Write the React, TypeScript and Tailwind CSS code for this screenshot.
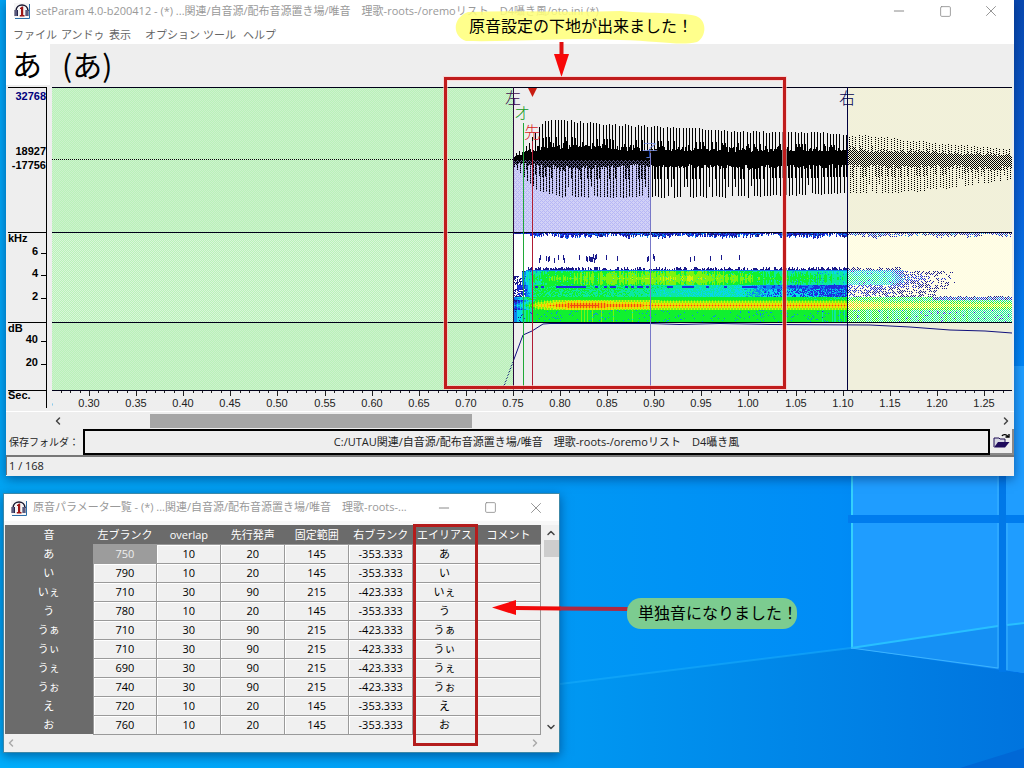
import { ChevronDown, ChevronLeft, ChevronRight, ChevronUp, Minus, Square, X } from "lucide-react";

type Point = [number, number];

const menu = [
  { label: "ファイル", width: "w-12" },
  { label: "アンドゥ", width: "w-12" },
  { label: "表示", width: "w-9" },
  { label: "オプション", width: "w-[58px]" },
  { label: "ツール", width: "w-10" },
  { label: "ヘルプ", width: "w-10" },
];

const columns = ["左ブランク", "overlap", "先行発声", "固定範囲", "右ブランク", "エイリアス", "コメント"];

const rows = [
  { sound: "あ", values: ["750", "10", "20", "145", "-353.333"] },
  { sound: "い", values: ["790", "10", "20", "145", "-353.333"] },
  { sound: "いぇ", values: ["710", "30", "90", "215", "-423.333"] },
  { sound: "う", values: ["780", "10", "20", "145", "-353.333"] },
  { sound: "うぁ", values: ["710", "30", "90", "215", "-423.333"] },
  { sound: "うぃ", values: ["710", "30", "90", "215", "-423.333"] },
  { sound: "うぇ", values: ["690", "30", "90", "215", "-423.333"] },
  { sound: "うぉ", values: ["740", "30", "90", "215", "-423.333"] },
  { sound: "え", values: ["720", "10", "20", "145", "-353.333"] },
  { sound: "お", values: ["760", "10", "20", "145", "-353.333"] },
];

// --- chart data -----------------------------------------------------------

const WIDTH = 960;
const START = 461;
const RIGHT = 795;

// cheap repeatable noise, 0..1
function noise(x: number, y: number) {
  const n = Math.sin(x * 127.1 + y * 311.7) * 43758.5453;
  return n - Math.floor(n);
}

function lerp(points: Point[], x: number) {
  if (x <= points[0][0]) return points[0][1];
  for (let i = 1; i < points.length; i++) {
    const [x0, y0] = points[i - 1];
    const [x1, y1] = points[i];
    if (x <= x1) return y0 + ((y1 - y0) * (x - x0)) / (x1 - x0);
  }
  return points[points.length - 1][1];
}

const topEnvelope: Point[] = [[461, 4], [475, 14], [484, 28], [492, 39], [506, 41], [548, 36], [588, 34], [640, 32], [690, 28], [768, 27], [795, 24], [810, 25], [850, 20], [900, 15], [960, 10]];
const bottomEnvelope: Point[] = [[461, 6], [472, 18], [486, 32], [510, 38], [590, 38], [690, 38], [795, 34], [840, 34], [890, 30], [960, 20]];
const coreTop: Point[] = [[461, 2], [480, 10], [500, 14], [600, 11], [795, 10], [960, 4]];
const coreBottom: Point[] = [[461, 3], [480, 5], [510, 8], [590, 5], [700, 7], [795, 6], [960, 8]];

function buildWave() {
  let d = "";
  for (let x = START; x < WIDTH; x++) {
    const phase = (x - START) % 16;
    const spikeUp = phase === 0 || phase === 3 || phase === 6 || phase === 10 || phase === 13;
    const spikeDown = phase === 1 || phase === 4 || phase === 7 || phase === 11 || phase === 14;
    const jitter = noise(x, 1);
    let top = lerp(coreTop, x) * (0.7 + jitter * 0.6);
    let bottom = lerp(coreBottom, x) * (0.7 + noise(x, 2) * 0.7);
    if (spikeUp) {
      top = lerp(topEnvelope, x) * (0.94 + jitter * 0.06);
      if (jitter > 0.45) bottom = lerp(bottomEnvelope, x) * 0.5;
    }
    if (spikeDown) {
      bottom = lerp(bottomEnvelope, x) * (jitter > 0.12 ? 0.94 + noise(x, 3) * 0.06 : 0.7);
      if (jitter > 0.6) top = lerp(topEnvelope, x) * 0.55;
    }
    d += `M${x} ${Math.round(72 - top)}h1V${Math.round(73 + bottom)}h-1z`;
  }
  return d;
}

const palette = ["#1a1a8c", "#1c2ee0", "#0a86f0", "#08d8e8", "#0ce8a0", "#10f030", "#7cf410", "#d8f008", "#fcb400", "#f04a10"];

const upperLevel: Point[] = [[468, 2], [478, 4.4], [500, 5.7], [640, 6.4], [690, 5.7], [720, 5], [760, 5], [800, 4.1], [836, 3.6], [850, 1.6], [884, 0.6]];
const middleLevel: Point[] = [[461, 0.4], [472, 1], [482, 4.6], [560, 4.4], [600, 4], [690, 3.2], [715, 1.8], [795, 1], [880, 0.2]];
const lowerLevel: Point[] = [[461, 2], [472, 4.5], [484, 7.4], [500, 8.4], [525, 9.4], [560, 8.9], [620, 8.2], [795, 8.2], [840, 7.2], [960, 6.7]];
const bottomLevel: Point[] = [[461, 1.4], [472, 4.2], [490, 5.2], [740, 5], [795, 4.7], [960, 4]];

// palette index at a pixel of the spectrogram, -1 where it stays white
function level(x: number, y: number) {
  const n = noise(x, y);
  const c = noise(x, 7);
  // fringe under the upper border
  if (y < 153) {
    const clump = 0.5 + 0.5 * Math.sin(x / 7) * Math.sin(x / 17);
    const depth = x < 478 ? 1 : (x > RIGHT ? 2.6 : 3.2) + clump * 2.8 - noise(x, 4) * 4;
    return y - 146 < depth ? (n > 0.8 ? 2 : n > 0.4 ? 1 : 0) : -1;
  }
  if (y < 179) {
    if (x < 476 || x > 700) return -1;
    const middle = 171 + Math.round(noise(x, 12) * 4 - 2);
    const dense = x < 560 ? 0.3 + 0.3 * Math.sin(x / 6) : 0.1;
    return Math.abs(y - middle) < 3 && noise(x, 13) < dense ? 0 : -1;
  }
  if (y < 184) {
    if (x < 474 || x > 850) return -1;
    return y - 179 > c * 4 ? (y > 182 ? 2 : 0) : -1;
  }
  if (y < 198) {
    if (x > 884 + n * 20) return -1;
    if (x < 470) return n > 0.5 && y > 188 ? 0 : -1;
    if (x > 850 && n < (x - 830) / 90) return -1;
    const fall = Math.abs(y - 191) * 0.13;
    return lerp(upperLevel, x) - fall + (c - 0.5) * 1.1 + (n > 0.95 ? -2 : 0);
  }
  if (y < 202) {
    if (x > 895 || x < 465) return -1;
    if (x > RIGHT && n > 0.6) return -1;
    const dash = noise(Math.floor(x / 3), 5) > 0.6 && (y === 199 || y === 200);
    return dash && x > 482 ? 1 : lerp(middleLevel, x) + (n - 0.3);
  }
  if (y < 210) {
    if (x > 884) return y > 208 && c > 0.6 ? 0 : -1;
    if (x > RIGHT && n > 0.55) return -1;
    if (x < 473 && n > 0.6) return -1;
    return lerp(middleLevel, x) + (n - 0.5) * 1.2 + (x > 690 && x < RIGHT && n > 0.5 ? 1 : 0);
  }
  if (y < 213) {
    if (x > 880) return c * 2;
    return Math.min(lerp(bottomLevel, x) + (n - 0.5), 5);
  }
  if (y < 223) {
    const fall = Math.abs(y - 218) * 0.45;
    return lerp(lowerLevel, x) - fall + (x % 3 === 0 ? 0.4 : -0.6);
  }
  return lerp(bottomLevel, x) + (c - 0.5) * 0.8 + (n > 0.95 ? -3 : 0);
}

function buildSpectrogram() {
  const paths = palette.map(() => "");
  for (let x = START; x < WIDTH; x++) {
    let from = 146;
    let current = -2;
    for (let y = 146; y <= 235; y++) {
      const raw = y === 235 ? -2 : level(x, y);
      const next = raw <= -1 ? -1 : Math.max(0, Math.min(palette.length - 1, Math.round(raw)));
      if (next !== current || y === 235) {
        if (current >= 0) paths[current] += `M${x} ${from}h1v${y - from}h-1z`;
        current = next;
        from = y;
      }
    }
  }
  return paths;
}

const wave = buildWave();
const spectrogram = buildSpectrogram();

const ticks = Array.from({ length: 102 }, (_, i) => ({
  x: Math.round(37 + (i - 4) * 9.42),
  major: (i - 4) % 5 === 0,
}));

const labels = Array.from({ length: 21 }, (_, i) => ({
  x: Math.round(37 + (i - 1) * 47.1),
  text: (0.25 + i * 0.05).toFixed(2),
}));

// --- pieces ---------------------------------------------------------------

function Wallpaper() {
  return (
    <svg className="absolute inset-0 h-full w-full" viewBox="0 0 1024 768" preserveAspectRatio="none" aria-hidden="true">
      <defs>
        <linearGradient id="sky" x1="0" y1="0" x2="1" y2="0">
          <stop offset="0" stopColor="#00a5f4" />
          <stop offset="0.5" stopColor="#009af4" />
          <stop offset="0.82" stopColor="#008cf6" />
          <stop offset="1" stopColor="#0072e6" />
        </linearGradient>
        <linearGradient id="shade" x1="0" y1="0" x2="0" y2="1">
          <stop offset="0" stopColor="#0848b0" />
          <stop offset="0.5" stopColor="#0a60d8" />
          <stop offset="1" stopColor="#0088f8" />
        </linearGradient>
        <linearGradient id="floor" x1="0" y1="0" x2="1" y2="0">
          <stop offset="0" stopColor="#00aefc" />
          <stop offset="0.5" stopColor="#009cf4" />
          <stop offset="1" stopColor="#0074de" />
        </linearGradient>
      </defs>
      <rect width="1024" height="768" fill="url(#sky)" />
      <rect x="1000" width="24" height="380" fill="url(#shade)" />
      <path d="M0 720L560 684L851 648L1024 674V768H0z" fill="url(#floor)" />
      <path d="M560 684L851 648" stroke="#1cb0fc" strokeWidth="2" opacity="0.5" />
      <path d="M851 366H999V668L851 648zM1006 366H1024V673L1006 670z" fill="#1f9dff" />
      <path d="M851 648L1024 623V673z" fill="#1590f4" />
      <rect x="848" y="515" width="176" height="8" fill="#007cee" />
      <rect x="999" y="366" width="7" height="306" fill="#0078e8" />
      <path d="M851 366h2V515h-2zM851 523h2V648h-2z" fill="#34d0fc" />
      <path d="M851 648L998 626M1007 625L1024 623" stroke="#28c0ff" strokeWidth="2" />
      <path d="M851 648L998 668M998 366V515M998 523V668M1007 523V670" stroke="#3cb4ff" />
      <path d="M960 768L1024 748V768z" fill="#0068d6" />
    </svg>
  );
}

function AppIcon() {
  return (
    <svg className="h-4 w-4 shrink-0" viewBox="0 0 16 16" aria-hidden="true">
      <rect width="15" height="15" fill="#f6f6f6" />
      <path d="M15.5 1V15.5H1" fill="none" stroke="#2c6ea8" />
      <path d="M2 8C2 0 14 0 14 8" fill="none" stroke="#181830" strokeWidth="1.6" />
      <path d="M0.5 7H4V13H0.5zM11.5 7H14.5V13H11.5z" fill="#26264c" />
      <path d="M2 7V13M13 7V13" stroke="#8c8cb0" />
      <path d="M6 5L8 3.5H9.2V12H10.5V13.5H5.8V12H7V6H6z" fill="#9c1414" />
    </svg>
  );
}

function WindowButtons() {
  return (
    <div className="flex shrink-0 items-center text-[#8a8a8a]">
      <button type="button" aria-label="最小化" className="flex h-5 w-[46px] items-center justify-center"><Minus size={16} strokeWidth={1.5} /></button>
      <button type="button" aria-label="最大化" className="flex h-5 w-[46px] items-center justify-center"><Square size={13} strokeWidth={1.5} /></button>
      <button type="button" aria-label="閉じる" className="flex h-5 w-[46px] items-center justify-center"><X size={18} strokeWidth={1.2} /></button>
    </div>
  );
}

function Axis() {
  return (
    <svg className="h-[322px] w-[46px] shrink-0 font-['Liberation_Sans',sans-serif] text-[11px] font-bold" viewBox="0 0 46 322">
      <path d="M2 0.5H41M2 145.5H41M2 235.5H41M2 303.5H41M40.5 0V321" stroke="#000" fill="none" />
      <path d="M35 166.5H41M35 188.5H41M35 211.5H41M35 254.5H41M35 277.5H41" stroke="#000" />
      <g textAnchor="end">
        <text x="40" y="13" fill="#00007c">32768</text>
        <text x="40" y="68">18927</text>
        <text x="40" y="82">-17756</text>
        <text x="32" y="168">6</text>
        <text x="32" y="190">4</text>
        <text x="32" y="213">2</text>
        <text x="32" y="256">40</text>
        <text x="32" y="279">20</text>
      </g>
      <text x="2" y="155">kHz</text>
      <text x="2" y="245">dB</text>
      <text x="2" y="312">Sec.</text>
    </svg>
  );
}

function Chart() {
  return (
    <svg className="h-[322px] min-w-0 flex-1" viewBox="0 0 960 322" preserveAspectRatio="xMinYMin slice" role="img" aria-label="波形">
      <defs>
        <pattern id="green" width="2" height="2" patternUnits="userSpaceOnUse">
          <path d="M0 0h1v1H0zM1 1h1v1H1z" fill="#b9f2b9" shapeRendering="crispEdges" />
        </pattern>
        <pattern id="cream" width="2" height="2" patternUnits="userSpaceOnUse">
          <path d="M0 0h1v1H0zM1 1h1v1H1z" fill="#f3f2d8" shapeRendering="crispEdges" />
        </pattern>
        <pattern id="cream-light" width="2" height="2" patternUnits="userSpaceOnUse">
          <path d="M0 0h1v1H0zM1 1h1v1H1z" fill="#fffde2" shapeRendering="crispEdges" />
        </pattern>
        <pattern id="violet" width="4" height="4" patternUnits="userSpaceOnUse">
          <path d="M0 0h1v1H0zM2 2h1v1H2zM2 0h1v1H2zM0 2h1v1H0zM1 1h1v1H1zM3 3h1v1H3z" fill="#a4a4f6" shapeRendering="crispEdges" />
        </pattern>
      </defs>
      <rect x="461" y="146" width="335" height="89" fill="#fff" />
      <rect width="461" height="303" fill="#cdf2cd" />
      <rect y="146" width="461" height="89" fill="#daf6da" />
      <rect x="796" width="164" height="303" fill="#f0efdc" />
      <rect x="796" y="146" width="164" height="89" fill="#fffde8" />
      <rect x="462" y="73" width="136" height="72" fill="#d2d2f6" />
      <g shapeRendering="crispEdges">
        <path d={wave} />
        {spectrogram.map((d, i) => (
          <path key={palette[i]} d={d} fill={palette[i]} />
        ))}
      </g>
      <path d="M435 302L452 299L471 248L480 244L491 237L498 236.500H598L628 237.500L668 236.500L718 237.500L818 238L858 240L898 243L933 244L960 246" fill="none" stroke="#10107c" />
      <rect width="461" height="303" fill="url(#green)" />
      <rect x="796" width="164" height="145" fill="url(#cream)" />
      <rect x="796" y="146" width="164" height="89" fill="url(#cream-light)" />
      <rect x="462" y="73" width="136" height="72" fill="url(#violet)" fillOpacity="0.6" />
      <path d="M0 72.5H462" stroke="#000" strokeDasharray="1 1" />
      <path d="M0 0.5H960M0 145.5H960M0 235.5H960M0 303.5H960" stroke="#000018" />
      <path d="M461.5 0V303" stroke="#28083c" />
      <path d="M471.5 36V303" stroke="#20a838" />
      <path d="M480.5 54V303" stroke="#b01c34" />
      <path d="M598.5 66V303" stroke="#7878c8" />
      <path d="M795.5 0V303" stroke="#000040" />
      <path d="M476 1H485L480.5 10z" fill="#c81c10" />
      <g className="font-['Noto_Sans_CJK_JP',sans-serif] text-base font-light" textAnchor="middle">
        <text x="461" y="17" fill="#3c0c50">左</text>
        <text x="470" y="32" fill="#109820">オ</text>
        <text x="480" y="51" fill="#d81c1c">先</text>
        <text x="598" y="69" fill="#7c90e0">子</text>
        <text x="795" y="17" fill="#000050">右</text>
      </g>
      {ticks.map((t) => (
        <path key={t.x} d={`M${t.x + 0.5} 304v${t.major ? 5 : 2}`} stroke="#222" />
      ))}
      <g className="font-['Liberation_Sans',sans-serif] text-[11px]" textAnchor="middle" fill="#222">
        {labels.map((l) => (
          <text key={l.text} x={l.x} y="320">{l.text}</text>
        ))}
      </g>
    </svg>
  );
}

function FolderIcon() {
  return (
    <svg width="17" height="16" viewBox="0 0 17 16" aria-hidden="true">
      <path d="M1 14V5H6L7 6H12V9" fill="#d8d8e4" stroke="#1c0c54" />
      <path d="M1 14.5L5 9H16.5L12 14.5z" fill="#200c5c" />
      <path d="M9 3C10 1 14 1 15 4M12.5 4H16V1" fill="none" stroke="#000" strokeWidth="1.4" />
    </svg>
  );
}

function MainWindow() {
  return (
    <section className="absolute left-[6px] right-[10px] top-0 bg-[#eeeeee] pb-px shadow-[0_3px_10px_rgba(0,30,80,0.5)]">
      <header className="flex h-[22px] items-center bg-white pl-2">
        <AppIcon />
        <h1 className="ml-1.5 min-w-0 flex-1 truncate whitespace-pre text-[11px] text-[#999]">setParam 4.0-b200412 - (*) ...関連/自音源/配布音源置き場/唯音　理歌-roots-/oremoリスト　D4囁き風/oto.ini (*)</h1>
        <WindowButtons />
      </header>
      <nav className="flex h-[22px] items-center bg-white pl-[7px] text-[11px] text-[#666]">
        {menu.map((m) => (
          <button key={m.label} type="button" className={`${m.width} shrink-0 text-left whitespace-nowrap pt-1`}>{m.label}</button>
        ))}
      </nav>

      <div className="flex h-[43px] items-start text-[30px] leading-[41px] text-black">
        <span className="w-11 bg-white pl-1.5">あ</span>
        <span className="pl-3 font-['Noto_Sans_CJK_JP',sans-serif]">(あ)</span>
      </div>

      <div className="flex pr-0.5">
        <Axis />
        <Chart />
      </div>

      {/* Horizontal scroll */}
      <div className="mt-0.5 flex h-[18px] items-center border-t border-white pl-[46px] pr-0.5 text-[#444]">
        <button type="button" aria-label="左へ" className="w-[17px]"><ChevronLeft size={12} strokeWidth={3} /></button>
        <div className="h-full min-w-0 flex-1 pl-[81px] pt-0.5">
          <div className="h-[14px] w-[322px] bg-[#a6a6a6]" />
        </div>
        <button type="button" aria-label="右へ" className="flex w-[17px] justify-end"><ChevronRight size={12} strokeWidth={3} /></button>
      </div>

      <div className="flex h-[26px] items-stretch">
        <label htmlFor="folder" className="w-[77px] shrink-0 whitespace-nowrap pl-[3px] text-[10px] leading-[26px] text-[#222]">保存フォルダ：</label>
        <input
          id="folder"
          readOnly
          value="C:/UTAU関連/自音源/配布音源置き場/唯音　理歌-roots-/oremoリスト　D4囁き風"
          className="min-w-0 flex-1 border-2 border-black bg-[#eeeeee] text-center text-[11px] text-[#222] outline-none"
        />
        <button type="button" aria-label="フォルダを開く" className="flex w-6 items-center justify-center border-b-2 border-r-2 border-[#888]"><FolderIcon /></button>
      </div>
      <footer className="h-[20px] border-l border-t-2 border-[#777] pl-0.5 text-[11px] leading-[18px] text-[#222]">1 / 168</footer>
    </section>
  );
}

function ListWindow() {
  return (
    <section className="absolute left-[3px] top-[493px] w-[557px] border border-[#3c88a8] bg-[#f0f0f0] shadow-[0_3px_10px_rgba(0,30,80,0.5)]">
      <header className="flex h-[27px] items-center bg-white pl-[7px]">
        <AppIcon />
        <h2 className="ml-1.5 min-w-0 flex-1 truncate whitespace-pre text-[11px] text-[#999]">原音パラメータ一覧 - (*) ...関連/自音源/配布音源置き場/唯音　理歌-roots-...</h2>
        <WindowButtons />
      </header>
      <div className="flex border-t-4 border-[#f8f8f8] pl-px">
        <table className="w-[536px] table-fixed border-collapse text-center text-[11px] leading-[17px]">
          <thead>
            <tr className="h-[19px] bg-[#6b6b6b] text-white">
              <th scope="col" className="w-[88px] p-0 font-normal">音</th>
              {columns.map((c) => (
                <th key={c} scope="col" className="whitespace-nowrap p-0 font-normal">{c}</th>
              ))}
            </tr>
          </thead>
          <tbody>
            {rows.map((r, i) => (
              <tr key={r.sound} className="h-[19px] text-black">
                <th scope="row" className="bg-[#6b6b6b] p-0 font-normal text-white">{r.sound}</th>
                {[...r.values, r.sound, ""].map((v, j) => (
                  <td key={j} className={i === 0 && j === 0 ? "border border-[#9c9c9c] bg-[#9c9c9c] p-0 text-[#eee]" : "border border-[#9a9a9a] p-0 shadow-[inset_1px_1px_0_#fff]"}>{v}</td>
                ))}
              </tr>
            ))}
          </tbody>
        </table>
        <div className="flex flex-1 flex-col items-center justify-between pl-0.5 text-[#444]">
          <button type="button" aria-label="上へ" className="flex h-[15px] items-center"><ChevronUp size={12} strokeWidth={3} /></button>
          <div className="h-[17px] w-[15px] bg-[#cdcdcd]" />
          <div className="flex-1" />
          <button type="button" aria-label="下へ" className="flex h-[15px] items-center"><ChevronDown size={12} strokeWidth={3} /></button>
        </div>
      </div>
      <div className="flex h-[17px] items-center justify-between pl-px pr-[18px] text-[#aaa]">
        <button type="button" aria-label="左へ"><ChevronLeft size={12} strokeWidth={3} /></button>
        <button type="button" aria-label="右へ"><ChevronRight size={12} strokeWidth={3} /></button>
      </div>
    </section>
  );
}

function Annotations() {
  return (
    <div className="pointer-events-none absolute inset-0">
      <svg className="absolute left-0 top-0" width="1024" height="768" viewBox="0 0 1024 768" aria-hidden="true">
        <path d="M468 12C520 10 570 13 620 11C655 14 680 12 696 16C707 20 707 36 697 42C680 46 660 41 620 40C570 37 520 42 466 41C452 36 452 18 468 12z" fill="#ffff78" fillOpacity="0.85" />
        <path d="M561.5 42V60" stroke="#e01010" strokeWidth="4" />
        <path d="M554 54H569L561.5 77z" fill="#f80808" />
        <rect x="445.500" y="78.500" width="339" height="309" fill="none" stroke="#ffc8c8" strokeWidth="5" opacity="0.6" />
        <rect x="445.500" y="78.500" width="339" height="309" fill="none" stroke="#c01c1c" strokeWidth="3" />
        <rect x="414.500" y="525.500" width="62" height="219" fill="none" stroke="#b41c1c" strokeWidth="3" />
        <path d="M515 608L561 608.500" stroke="#f00808" strokeWidth="4" />
        <path d="M560 608.500L628 609" stroke="#b02840" strokeWidth="4" />
        <path d="M492 607.500L516 600V615z" fill="#f80808" />
        <rect x="627" y="598" width="170" height="31" rx="14" fill="#7ccc90" />
      </svg>
      <p className="absolute left-[469px] top-[14px] whitespace-nowrap text-base leading-6 text-black">原音設定の下地が出来ました！</p>
      <p className="absolute left-[638px] top-[601px] whitespace-nowrap text-base leading-6 text-black">単独音になりました！</p>
    </div>
  );
}

export default function App() {
  return (
    <main className="relative min-h-screen overflow-hidden font-['Open_Sans','Noto_Sans_CJK_JP',sans-serif]">
      <Wallpaper />
      <MainWindow />
      <ListWindow />
      <Annotations />
    </main>
  );
}
